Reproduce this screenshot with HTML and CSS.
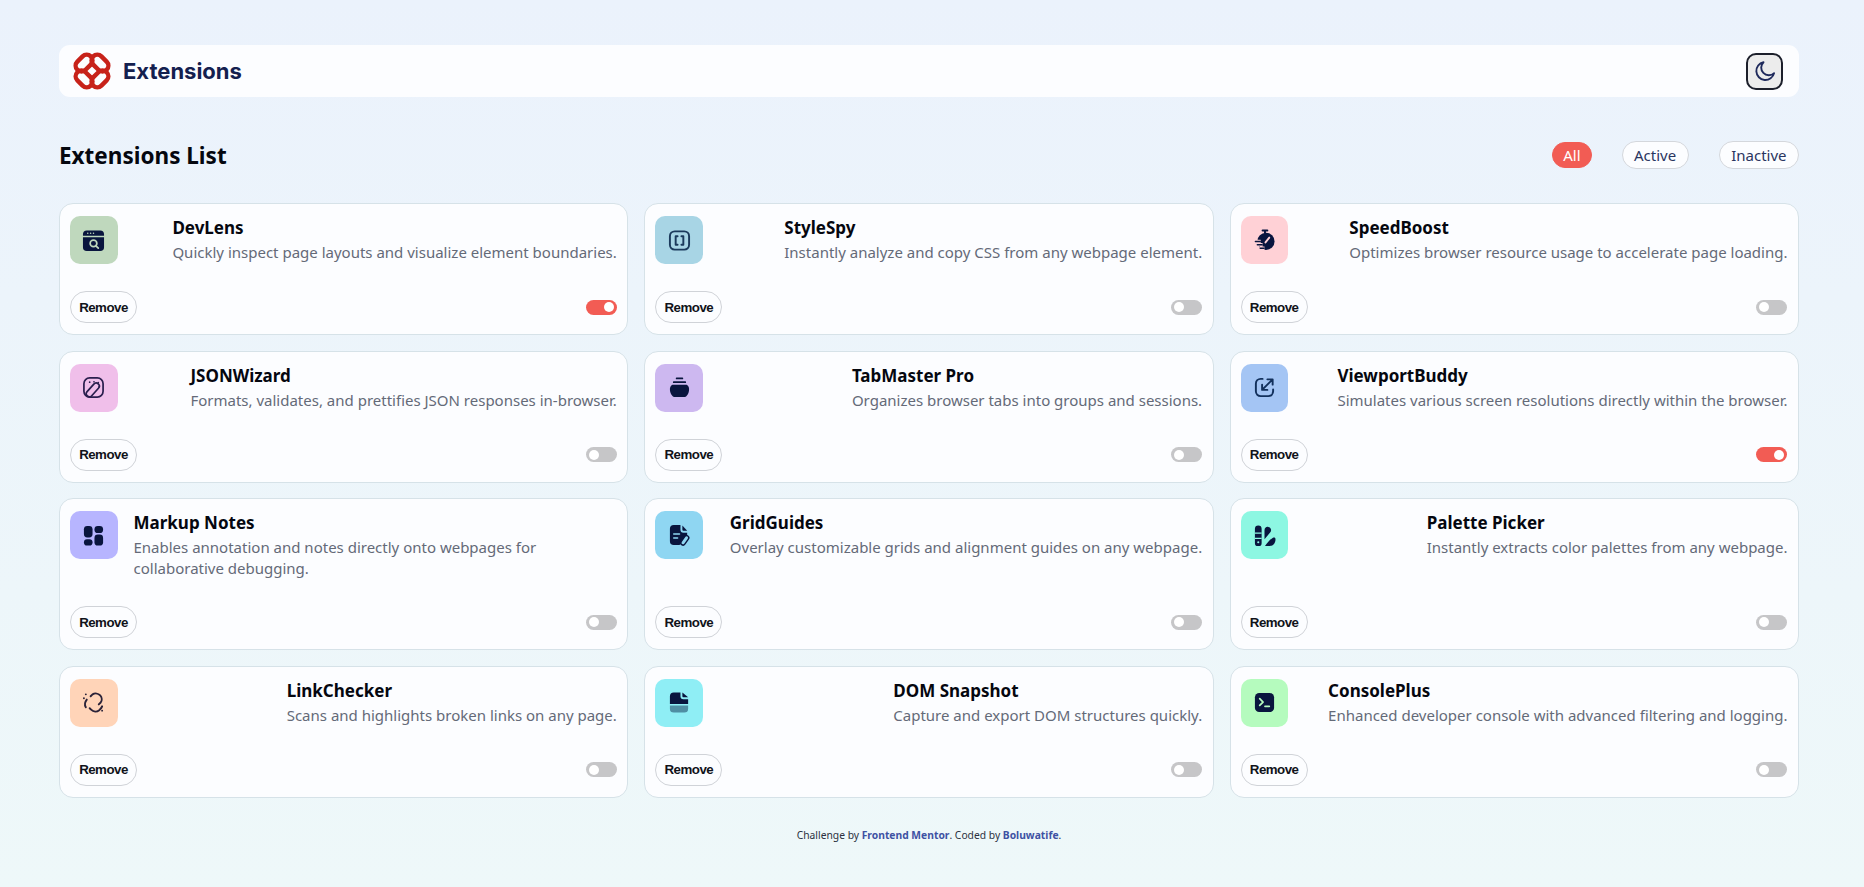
FILE: index.html
```html
<!DOCTYPE html>
<html>
	<head>
		<meta charset="UTF-8">
		<title>Extensions</title>
		<link rel="stylesheet" href="styles.css">
	</head>
	<body>
		<div class="page">
			<header class="top">
				<div class="brand">
					<svg class="logo" viewBox="1 1 36 36" fill="none" stroke="#c7221a" stroke-width="4.2">
						<rect x="2.500" y="6" width="18" height="11" rx="5.500" transform="rotate(-45 11.500 11.500)"/>
						<rect x="17.500" y="6" width="18" height="11" rx="5.500" transform="rotate(45 26.500 11.500)"/>
						<rect x="2.500" y="21" width="18" height="11" rx="5.500" transform="rotate(45 11.500 26.500)"/>
						<rect x="17.500" y="21" width="18" height="11" rx="5.500" transform="rotate(-45 26.500 26.500)"/>
					</svg>
					<span class="brand-name">Extensions</span>
				</div>
				<button class="theme">
					<svg viewBox="0 0 24 24" fill="none" stroke="#1f2a5c" stroke-width="1.9" stroke-linecap="round" stroke-linejoin="round"><path d="M10.5 3.2a9 9 0 1 0 10.6 10.9 7.6 7.6 0 0 1-10.6-10.9z"/></svg>
				</button>
			</header>

			<div class="list-head">
				<h1>Extensions List</h1>
				<div class="filters">
					<button class="filter active">All</button>
					<button class="filter">Active</button>
					<button class="filter">Inactive</button>
				</div>
			</div>

			<main class="grid">
				<article class="card">
					<div class="card-top">
						<div class="ico c1">
							<svg viewBox="0 0 24 24"><path fill="#09153e" d="M5 1.5h14a4 4 0 0 1 4 4v1.5H1V5.500a4 4 0 0 1 4-4zM1 8.500h22V19a4 4 0 0 1-4 4H5a4 4 0 0 1-4-4z"/><g fill="#bfd8bd"><circle cx="6" cy="4.400" r=".8"/><circle cx="9" cy="4.400" r=".8"/><circle cx="12" cy="4.400" r=".8"/></g><circle cx="12" cy="15" r="3.500" fill="none" stroke="#bfd8bd" stroke-width="1.800"/><path d="M14.500 17.500l2.500 2.500" stroke="#bfd8bd" stroke-width="1.800" stroke-linecap="round"/></svg>
						</div>
						<div class="info">
							<h2>DevLens</h2>
							<p>Quickly inspect page layouts and visualize element boundaries.</p>
						</div>
					</div>
					<div class="card-bottom">
						<button class="remove">Remove</button>
						<span class="switch on"></span>
					</div>
				</article>

				<article class="card">
					<div class="card-top">
						<div class="ico c2">
							<svg viewBox="0 0 24 24" fill="none" stroke="#1b3a5c" stroke-width="2" stroke-linecap="round" stroke-linejoin="round"><rect x="2" y="2.500" width="20" height="19" rx="5"/><path d="M10 7.500H8v9h2M14 7.500h2v9h-2"/></svg>
						</div>
						<div class="info">
							<h2>StyleSpy</h2>
							<p>Instantly analyze and copy CSS from any webpage element.</p>
						</div>
					</div>
					<div class="card-bottom">
						<button class="remove">Remove</button>
						<span class="switch"></span>
					</div>
				</article>

				<article class="card">
					<div class="card-top">
						<div class="ico c3">
							<svg viewBox="0 0 24 24"><path d="M10 1.500h5" stroke="#09153e" stroke-width="2" stroke-linecap="round"/><path d="M12.500 2v3" stroke="#09153e" stroke-width="2"/><circle cx="13.500" cy="13" r="9" fill="#09153e"/><path d="M13 14l4-5" stroke="#ffd1d6" stroke-width="2" stroke-linecap="round"/><path d="M2 13h6M4 16.500h6M7 20h5" stroke="#ffd1d6" stroke-width="3.600"/><path d="M2.500 13h5M4.500 16.500h5M7.500 20h4" stroke="#09153e" stroke-width="1.500" stroke-linecap="round"/></svg>
						</div>
						<div class="info">
							<h2>SpeedBoost</h2>
							<p>Optimizes browser resource usage to accelerate page loading.</p>
						</div>
					</div>
					<div class="card-bottom">
						<button class="remove">Remove</button>
						<span class="switch"></span>
					</div>
				</article>

				<article class="card">
					<div class="card-top">
						<div class="ico c4">
							<svg viewBox="0 0 24 24" fill="none" stroke="#2a1f4e" stroke-width="1.800" stroke-linecap="round" stroke-linejoin="round"><rect x="2" y="2" width="20" height="20" rx="6"/><rect x="8" y="6" width="6.500" height="17" rx="3.250" transform="rotate(42 11.250 14.500)" fill="#f0bfea"/><path d="M8 6.500h.01M12.500 6h.01M17 7h.01M18 11h.01"/></svg>
						</div>
						<div class="info">
							<h2>JSONWizard</h2>
							<p>Formats, validates, and prettifies JSON responses in-browser.</p>
						</div>
					</div>
					<div class="card-bottom">
						<button class="remove">Remove</button>
						<span class="switch"></span>
					</div>
				</article>

				<article class="card">
					<div class="card-top">
						<div class="ico c5">
							<svg viewBox="0 0 24 24"><path d="M9 2.500h6M6 6.500h12" stroke="#09153e" stroke-width="1.800" stroke-linecap="round"/><path fill="#09153e" d="M4.500 9h15c1.500 1 2.500 2.500 2.500 4.500 0 4-2 8.500-5.500 8.500h-9C4 22 2 17.500 2 13.500 2 11.500 3 10 4.500 9z"/></svg>
						</div>
						<div class="info">
							<h2>TabMaster Pro</h2>
							<p>Organizes browser tabs into groups and sessions.</p>
						</div>
					</div>
					<div class="card-bottom">
						<button class="remove">Remove</button>
						<span class="switch"></span>
					</div>
				</article>

				<article class="card">
					<div class="card-top">
						<div class="ico c6">
							<svg viewBox="0 0 24 24" fill="none" stroke="#12305c" stroke-width="2" stroke-linecap="round" stroke-linejoin="round"><path d="M10 3H8a5 5 0 0 0-5 5v8a5 5 0 0 0 5 5h8a5 5 0 0 0 5-5v-2"/><path d="M10 14L20 4M15 3.500h5.500V9M9.500 9v5.500H15"/></svg>
						</div>
						<div class="info">
							<h2>ViewportBuddy</h2>
							<p>Simulates various screen resolutions directly within the browser.</p>
						</div>
					</div>
					<div class="card-bottom">
						<button class="remove">Remove</button>
						<span class="switch on"></span>
					</div>
				</article>

				<article class="card">
					<div class="card-top">
						<div class="ico c7">
							<svg viewBox="0 0 24 24" fill="#09153e"><rect x="2" y="2" width="9" height="12" rx="3.500"/><rect x="13" y="2" width="9" height="7.500" rx="3.500"/><rect x="2" y="16" width="9" height="6.500" rx="3.200"/><rect x="13" y="11" width="9" height="11.500" rx="3.500"/></svg>
						</div>
						<div class="info">
							<h2>Markup Notes</h2>
							<p>Enables annotation and notes directly onto webpages for collaborative debugging.</p>
						</div>
					</div>
					<div class="card-bottom">
						<button class="remove">Remove</button>
						<span class="switch"></span>
					</div>
				</article>

				<article class="card">
					<div class="card-top">
						<div class="ico c8">
							<svg viewBox="0 0 24 24"><path fill="#09153e" d="M6 1h7v5a3 3 0 0 0 3 3h4v5l-8 8H6a4 4 0 0 1-4-4V5a4 4 0 0 1 4-4z"/><path fill="#09153e" d="M15 1.500L20 7h-4a1 1 0 0 1-1-1z"/><path d="M6 10.500h6M6 14.500h4" stroke="#8fd6f2" stroke-width="1.600" stroke-linecap="round"/><rect x="15.200" y="11.500" width="4.600" height="11" rx="2.300" transform="rotate(35 17.500 17)" fill="#8fd6f2" stroke="#09153e" stroke-width="1.500"/></svg>
						</div>
						<div class="info">
							<h2>GridGuides</h2>
							<p>Overlay customizable grids and alignment guides on any webpage.</p>
						</div>
					</div>
					<div class="card-bottom">
						<button class="remove">Remove</button>
						<span class="switch"></span>
					</div>
				</article>

				<article class="card">
					<div class="card-top">
						<div class="ico c9">
							<svg viewBox="0 0 24 24"><path fill="#09153e" d="M2 5a3.500 3.500 0 0 1 7 0v15a3 3 0 0 1-3 3H5a3 3 0 0 1-3-3z"/><path d="M2 9.500h7M2 15h7" stroke="#8df7e2" stroke-width="1.500"/><circle cx="5.500" cy="19" r="1.100" fill="#8df7e2"/><path fill="#09153e" d="M12 16V6.500C12 4 14 2.500 16 3c2.500.5 3.500 2.500 2.500 5z"/><path fill="#09153e" d="M12.500 23c2.500-3.500 5-6.500 8-8.500 1.500-1 3-.5 3 1.500 0 4-2.500 7-6 7z"/></svg>
						</div>
						<div class="info">
							<h2>Palette Picker</h2>
							<p>Instantly extracts color palettes from any webpage.</p>
						</div>
					</div>
					<div class="card-bottom">
						<button class="remove">Remove</button>
						<span class="switch"></span>
					</div>
				</article>

				<article class="card">
					<div class="card-top">
						<div class="ico c10">
							<svg viewBox="0 0 24 24" fill="none" stroke="#2a2238" stroke-width="2" stroke-linecap="round" stroke-linejoin="round"><path d="M9 5.500l2-2c2.500-1.500 6-1 8 1 2 2.200 2 5.500.5 7.500l-2 2"/><path d="M21 16c-.5 1.500-1.500 2.500-3 4-2.500 2-6 2-8.500-.5l-1.500-1.500"/><path d="M5 9c-2 2.500-2.500 5.500-1 8"/><path d="M4 3.500v.01M2 7.500v.01M21 20.500v.01"/></svg>
						</div>
						<div class="info">
							<h2>LinkChecker</h2>
							<p>Scans and highlights broken links on any page.</p>
						</div>
					</div>
					<div class="card-bottom">
						<button class="remove">Remove</button>
						<span class="switch"></span>
					</div>
				</article>

				<article class="card">
					<div class="card-top">
						<div class="ico c11">
							<svg viewBox="0 0 24 24"><path fill="#09153e" d="M6 1.500h7v4a3 3 0 0 0 3 3h5v5H2V5.500a4 4 0 0 1 4-4z"/><path fill="#09153e" d="M15 1.500l6 5h-5a1 1 0 0 1-1-1z"/><path fill="#4f8ea3" d="M2 15h19v3.500a4 4 0 0 1-4 4H6a4 4 0 0 1-4-4z"/></svg>
						</div>
						<div class="info">
							<h2>DOM Snapshot</h2>
							<p>Capture and export DOM structures quickly.</p>
						</div>
					</div>
					<div class="card-bottom">
						<button class="remove">Remove</button>
						<span class="switch"></span>
					</div>
				</article>

				<article class="card">
					<div class="card-top">
						<div class="ico c12">
							<svg viewBox="0 0 24 24"><rect x="2" y="2" width="20" height="20" rx="4.500" fill="#09153e"/><path d="M7 8l3.500 3.500L7 15M12.500 16h4.500" fill="none" stroke="#b5fbbe" stroke-width="1.800" stroke-linecap="round" stroke-linejoin="round"/></svg>
						</div>
						<div class="info">
							<h2>ConsolePlus</h2>
							<p>Enhanced developer console with advanced filtering and logging.</p>
						</div>
					</div>
					<div class="card-bottom">
						<button class="remove">Remove</button>
						<span class="switch"></span>
					</div>
				</article>
			</main>

			<footer class="foot">
				Challenge by <a href="#">Frontend Mentor</a>. Coded by <a href="#">Boluwatife</a>.
			</footer>
		</div>
	</body>
</html>
```

FILE: styles.css
```css
*{
	padding:0px;margin:0px;box-sizing:border-box;
}
html,body{
	height:100%;
}
body{
	background:linear-gradient(180deg,#ebf2fc 0%,#eef8f9 100%);
	font-family:"Noto Sans",sans-serif;
	color:#09153e;
}
.page{
	padding:45px 65px 0px 59px;
}
button{
	font-family:inherit;
	cursor:pointer;
}
.top{
	height:52px;
	background-color:#fcfdff;
	border-radius:11px;
	display:flex;
	align-items:center;
	justify-content:space-between;
	padding:0px 16px 0px 14px;
}
.brand{
	display:flex;
	align-items:center;
	gap:12px;
}
.logo{
	width:38px;
	height:38px;
}
.brand-name{
	font-family:"Inter",sans-serif;
	font-size:22px;
	font-weight:700;
	color:#14204f;
}
.theme{
	width:37px;
	height:37px;
	background-color:#ececec;
	border:2.500px solid #1c1f2b;
	border-radius:10px;
	display:flex;
	align-items:center;
	justify-content:center;
}
.theme svg{
	width:24px;
	height:24px;
	flex:none;
}
.list-head{
	display:flex;
	align-items:center;
	justify-content:space-between;
	margin-top:42px;
	height:32px;
}
h1{
	font-size:22.500px;
	font-weight:700;
	color:#05070f;
}
.filters{
	display:flex;
	align-items:center;
	gap:30px;
}
.filter{
	height:28px;
	padding:0px 11.500px;
	background-color:#fcfdff;
	border:1.500px solid #d4d7dc;
	border-radius:14px;
	font-size:15px;
	color:#2a3560;
}
.filter.active{
	height:26px;
	padding:0px 10px;
	background-color:#f25c54;
	border-color:#f25c54;
	color:#fff;
}
.grid{
	display:grid;
	grid-template-columns:repeat(3,1fr);
	gap:15.500px 16px;
	margin-top:32px;
}
.card{
	background-color:#fcfdff;
	border:1px solid #d6e2e8;
	border-radius:14px;
	padding:12px 10.500px 11px 10px;
	display:flex;
	flex-direction:column;
	justify-content:space-between;
}
.card-top{
	display:flex;
	justify-content:space-between;
	gap:16px;
}
.ico{
	flex:none;
	width:47.500px;
	height:48px;
	border-radius:10px;
	display:flex;
	align-items:center;
	justify-content:center;
}
.ico svg{
	width:23px;
	height:23px;
}
.c1{background-color:#bfd8bd;}
.c2{background-color:#a8d5e5;}
.c3{background-color:#ffd1d6;}
.c4{background-color:#f0bfea;}
.c5{background-color:#cdb8f0;}
.c6{background-color:#a4c5f4;}
.c7{background-color:#b7b5ff;}
.c8{background-color:#8fd6f2;}
.c9{background-color:#8df7e2;}
.c10{background-color:#ffd4b8;}
.c11{background-color:#8feef5;}
.c12{background-color:#b5fbbe;}
.info h2{
	font-size:17px;
	font-weight:700;
	line-height:23px;
	color:#05070f;
}
.info p{
	font-size:15px;
	line-height:21px;
	margin-top:3px;
	color:#646a78;
}
.card-bottom{
	display:flex;
	align-items:center;
	justify-content:space-between;
	margin-top:27px;
}
.remove{
	width:67px;
	height:32px;
	background-color:#fcfdff;
	border:1.500px solid #d0d3d8;
	border-radius:16px;
	font-family:"Liberation Sans",sans-serif;
	font-size:13.300px;
	font-weight:700;
	letter-spacing:-0.500px;
	color:#11131a;
}
.switch{
	position:relative;
	width:31px;
	height:15px;
	border-radius:8px;
	background-color:#c6c6c8;
}
.switch:after{
	content:"";
	position:absolute;
	left:3px;
	top:2.500px;
	width:10px;
	height:10px;
	border-radius:50%;
	background-color:#fff;
}
.switch.on{
	background-color:#f25c54;
}
.switch.on:after{
	left:18px;
}
.foot{
	margin-top:30px;
	text-align:center;
	font-size:10.300px;
	line-height:15px;
	color:#2b3040;
}
.foot a{
	text-decoration:none;
	font-weight:700;
	color:#3e52a3;
}
```
